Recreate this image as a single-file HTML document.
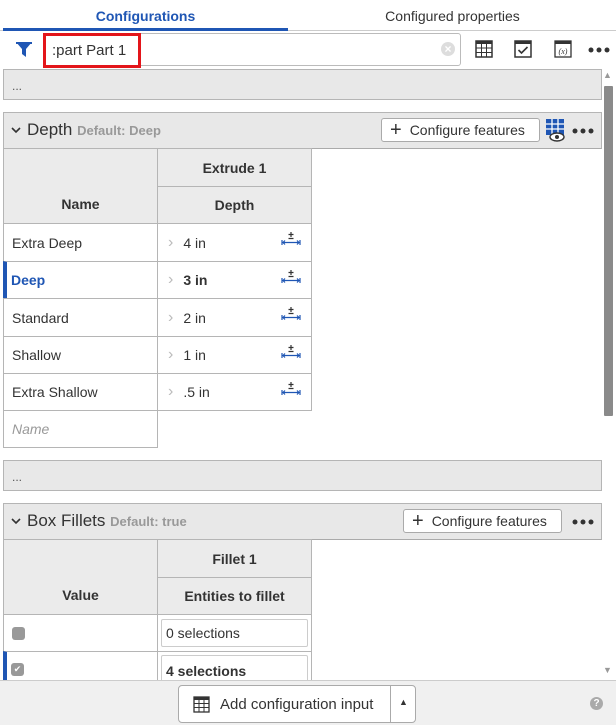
<!DOCTYPE html>
<html><head><style>
*{box-sizing:border-box;margin:0;padding:0}
body{width:616px;height:725px;overflow:hidden;background:#fff;font-family:"Liberation Sans",sans-serif;font-size:14px;color:#333;position:relative}
.a{position:absolute}
.bar{position:absolute;left:3px;width:599px;background:#e8e8e8;border:1px solid #b5b5b5;font-size:12px;color:#555;padding-left:8px}
.hd{position:absolute;left:3px;width:599px;background:#e8e8e8;border:1px solid #b5b5b5;border-bottom-color:#aaa}
.c{position:absolute;border:1px solid #b5b5b5;display:flex;align-items:center}
.th{background:#ebebeb;font-weight:bold;justify-content:center;color:#333}
.btn{position:absolute;background:#fff;border:1px solid #aaa;border-radius:3px;display:flex;align-items:center;font-size:14px;color:#333}
.chev{color:#bbb;margin:0 10px 0 10px;font-size:16px}
</style></head><body>
<div class="a" style="left:0;top:0;width:616px;height:31px;border-bottom:1px solid #ccc"></div>
<div class="a" style="left:3px;top:0;width:285px;height:31px;border-bottom:3px solid #1f56b4;text-align:center;line-height:33px;color:#1f56b4;font-weight:bold;font-size:14px">Configurations</div>
<div class="a" style="left:300px;top:0;width:305px;line-height:33px;text-align:center;font-size:14px;color:#333">Configured properties</div>
<svg class="a" style="left:15px;top:41px" width="18" height="17" viewBox="0 0 18 17"><path d="M1 1h16l-6 7v8l-4-3V8z" fill="#1f56b4"/><rect x="1" y="1" width="16" height="2" fill="#1f56b4"/></svg>
<div class="a" style="left:43px;top:33px;width:418px;height:33px;border:1px solid #bbb;border-radius:3px"></div>
<div class="a" style="left:43px;top:33px;width:98px;height:35px;border:3px solid #e3151a;line-height:29px;padding-left:6px;font-size:15px;color:#333">:part Part 1</div>
<div class="a" style="left:441px;top:42px;width:14px;height:14px;border-radius:50%;background:#ddd;color:#fff;font-size:12px;line-height:14px;text-align:center;font-weight:bold">×</div>
<svg class="a" style="left:475px;top:40px" width="18" height="18"><rect x="1" y="1" width="16" height="16" fill="none" stroke="#333" stroke-width="1.5"/><rect x="1" y="1" width="16" height="3" fill="#333"/><path d="M1 8h16M1 12.5h16M6.5 4v13M11.5 4v13" stroke="#333"/></svg>
<svg class="a" style="left:514px;top:40px" width="18" height="18"><rect x="1" y="1" width="16" height="16" fill="none" stroke="#333" stroke-width="1.5"/><rect x="1" y="1" width="16" height="3" fill="#333"/><path d="M4.5 10l3 3 6-6" fill="none" stroke="#333" stroke-width="1.6"/></svg>
<svg class="a" style="left:554px;top:40px" width="18" height="18"><rect x="1" y="1" width="16" height="16" fill="none" stroke="#333" stroke-width="1.3"/><rect x="1" y="1" width="16" height="3" fill="#333"/><text x="9" y="14" font-size="8" text-anchor="middle" font-family="Liberation Serif" font-style="italic" fill="#333">(x)</text></svg>
<svg class="a" style="left:588px;top:46px" width="24" height="8"><circle cx="3" cy="4" r="2.5" fill="#333"/><circle cx="11" cy="4" r="2.5" fill="#333"/><circle cx="19" cy="4" r="2.5" fill="#333"/></svg>
<div class="bar" style="top:69px;height:31px;line-height:32px">...</div>
<div class="a" style="left:603px;top:70px;font-size:9px;color:#999">▲</div>
<div class="a" style="left:604px;top:86px;width:9px;height:330px;background:#8a8a8a;border-radius:1px"></div>
<div class="a" style="left:603px;top:665px;font-size:9px;color:#999">▼</div>

<div class="hd" style="top:112px;height:37px"></div>
<svg class="a" style="left:11px;top:127px" width="10" height="7"><path d="M1 1l4 4 4-4" fill="none" stroke="#333" stroke-width="1.6"/></svg>
<div class="a" style="left:27px;top:120px;font-size:17px;color:#333">Depth <span style="font-size:13px;color:#999;font-weight:bold">Default: Deep</span></div>
<div class="btn" style="left:381px;top:118px;width:159px;height:24px;padding-left:8px"><span style="font-size:20px;margin-right:8px;line-height:1">+</span>Configure features</div>
<svg class="a" style="left:545px;top:118px" width="22" height="26"><rect x="1" y="1" width="18" height="16" fill="#1f56b4"/><path d="M1 6h18M1 11h18M7 1v16M13 1v16" stroke="#fff" stroke-width="1.3"/><ellipse cx="12" cy="19" rx="7" ry="4" fill="#fff" stroke="#333" stroke-width="1.4"/><circle cx="12" cy="19" r="2" fill="#333"/></svg>
<svg class="a" style="left:572px;top:127px" width="24" height="8"><circle cx="3" cy="4" r="2.5" fill="#333"/><circle cx="11" cy="4" r="2.5" fill="#333"/><circle cx="19" cy="4" r="2.5" fill="#333"/></svg>

<div class="c th" style="left:3px;top:148px;width:155px;height:76px;padding-top:36px">Name</div>
<div class="c th" style="left:157px;top:148px;width:155px;height:39px">Extrude 1</div>
<div class="c th" style="left:157px;top:186px;width:155px;height:38px">Depth</div>

<div class="c" style="left:3px;top:223px;width:155px;height:39px;padding-left:8px">Extra Deep</div>
<div class="c" style="left:157px;top:223px;width:155px;height:39px"><span class="chev">›</span>4 in</div>
<div class="c" style="left:3px;top:261px;width:155px;height:38px;padding-left:4px;color:#1f56b4;font-weight:bold;border-left:4px solid #1f56b4">Deep</div>
<div class="c" style="left:157px;top:261px;width:155px;height:38px;font-weight:bold"><span class="chev" style="font-weight:normal">›</span>3 in</div>
<div class="c" style="left:3px;top:298px;width:155px;height:39px;padding-left:8px">Standard</div>
<div class="c" style="left:157px;top:298px;width:155px;height:39px"><span class="chev">›</span>2 in</div>
<div class="c" style="left:3px;top:336px;width:155px;height:38px;padding-left:8px">Shallow</div>
<div class="c" style="left:157px;top:336px;width:155px;height:38px"><span class="chev">›</span>1 in</div>
<div class="c" style="left:3px;top:373px;width:155px;height:38px;padding-left:8px">Extra Shallow</div>
<div class="c" style="left:157px;top:373px;width:155px;height:38px"><span class="chev">›</span>.5 in</div>
<div class="c" style="left:3px;top:410px;width:155px;height:38px;padding-left:8px;color:#999;font-style:italic">Name</div>

<svg class="a" style="left:281px;top:230px" width="20" height="16"><g stroke="#1f56b4" fill="none" stroke-width="1.2"><path d="M1 10v5M19 10v5M2 12.5h16M4 10.5l-2 2 2 2M16 10.5l2 2-2 2"/></g><path d="M10 2v5M7.5 4.5h5M7.5 8.5h5" stroke="#333" stroke-width="1.2"/></svg>
<svg class="a" style="left:281px;top:268px" width="20" height="16"><g stroke="#1f56b4" fill="none" stroke-width="1.2"><path d="M1 10v5M19 10v5M2 12.5h16M4 10.5l-2 2 2 2M16 10.5l2 2-2 2"/></g><path d="M10 2v5M7.5 4.5h5M7.5 8.5h5" stroke="#333" stroke-width="1.2"/></svg>
<svg class="a" style="left:281px;top:305px" width="20" height="16"><g stroke="#1f56b4" fill="none" stroke-width="1.2"><path d="M1 10v5M19 10v5M2 12.5h16M4 10.5l-2 2 2 2M16 10.5l2 2-2 2"/></g><path d="M10 2v5M7.5 4.5h5M7.5 8.5h5" stroke="#333" stroke-width="1.2"/></svg>
<svg class="a" style="left:281px;top:343px" width="20" height="16"><g stroke="#1f56b4" fill="none" stroke-width="1.2"><path d="M1 10v5M19 10v5M2 12.5h16M4 10.5l-2 2 2 2M16 10.5l2 2-2 2"/></g><path d="M10 2v5M7.5 4.5h5M7.5 8.5h5" stroke="#333" stroke-width="1.2"/></svg>
<svg class="a" style="left:281px;top:380px" width="20" height="16"><g stroke="#1f56b4" fill="none" stroke-width="1.2"><path d="M1 10v5M19 10v5M2 12.5h16M4 10.5l-2 2 2 2M16 10.5l2 2-2 2"/></g><path d="M10 2v5M7.5 4.5h5M7.5 8.5h5" stroke="#333" stroke-width="1.2"/></svg>

<div class="bar" style="top:460px;height:31px;line-height:32px">...</div>

<div class="hd" style="top:503px;height:37px"></div>
<svg class="a" style="left:11px;top:518px" width="10" height="7"><path d="M1 1l4 4 4-4" fill="none" stroke="#333" stroke-width="1.6"/></svg>
<div class="a" style="left:27px;top:511px;font-size:17px;color:#333">Box Fillets <span style="font-size:13px;color:#999;font-weight:bold">Default: true</span></div>
<div class="btn" style="left:403px;top:509px;width:159px;height:24px;padding-left:8px"><span style="font-size:20px;margin-right:8px;line-height:1">+</span>Configure features</div>
<svg class="a" style="left:572px;top:518px" width="24" height="8"><circle cx="3" cy="4" r="2.5" fill="#333"/><circle cx="11" cy="4" r="2.5" fill="#333"/><circle cx="19" cy="4" r="2.5" fill="#333"/></svg>

<div class="c th" style="left:3px;top:539px;width:155px;height:76px;padding-top:36px">Value</div>
<div class="c th" style="left:157px;top:539px;width:155px;height:39px">Fillet 1</div>
<div class="c th" style="left:157px;top:577px;width:155px;height:38px">Entities to fillet</div>
<div class="c" style="left:3px;top:614px;width:155px;height:38px;padding-left:8px"><span style="width:13px;height:13px;background:#999;border-radius:3px;display:inline-block"></span></div>
<div class="c" style="left:157px;top:614px;width:155px;height:38px;padding:3px"><div style="border:1px solid #ccc;border-radius:2px;width:100%;height:28px;line-height:26px;padding-left:4px">0 selections</div></div>
<div class="c" style="left:3px;top:651px;width:155px;height:40px;padding-left:4px;border-left:4px solid #1f56b4;align-items:flex-start;padding-top:11px"><span style="width:13px;height:13px;background:#999;border-radius:3px;display:inline-block;color:#fff;font-size:9px;line-height:13px;text-align:center">✔</span></div>
<div class="c" style="left:157px;top:651px;width:155px;height:40px;padding:3px;align-items:flex-start"><div style="border:1px solid #ccc;border-radius:2px;width:100%;height:34px;line-height:30px;padding-left:4px;font-weight:bold">4 selections</div></div>

<div class="a" style="left:0;top:680px;width:616px;height:45px;background:#f0f0f0;border-top:1px solid #ccc"></div>
<div class="btn" style="left:178px;top:685px;width:238px;height:38px;border-radius:4px">
<svg style="margin:0 10px 0 14px" width="17" height="17"><rect x="1" y="1" width="15" height="15" fill="none" stroke="#333" stroke-width="1.3"/><rect x="1" y="1" width="15" height="3" fill="#333"/><path d="M1 7.5h15M1 11.5h15M6 4v12M11 4v12" stroke="#333"/></svg>
<span style="font-size:15px">Add configuration input</span>
<div style="position:absolute;left:211px;top:0;width:1px;height:36px;background:#aaa"></div>
<div style="position:absolute;left:220px;top:11px;font-size:9px">▲</div>
</div>
<div class="a" style="left:590px;top:697px;width:13px;height:13px;border-radius:50%;background:#aaa;color:#fff;font-size:10px;font-weight:bold;text-align:center;line-height:13px">?</div>
</body></html>
